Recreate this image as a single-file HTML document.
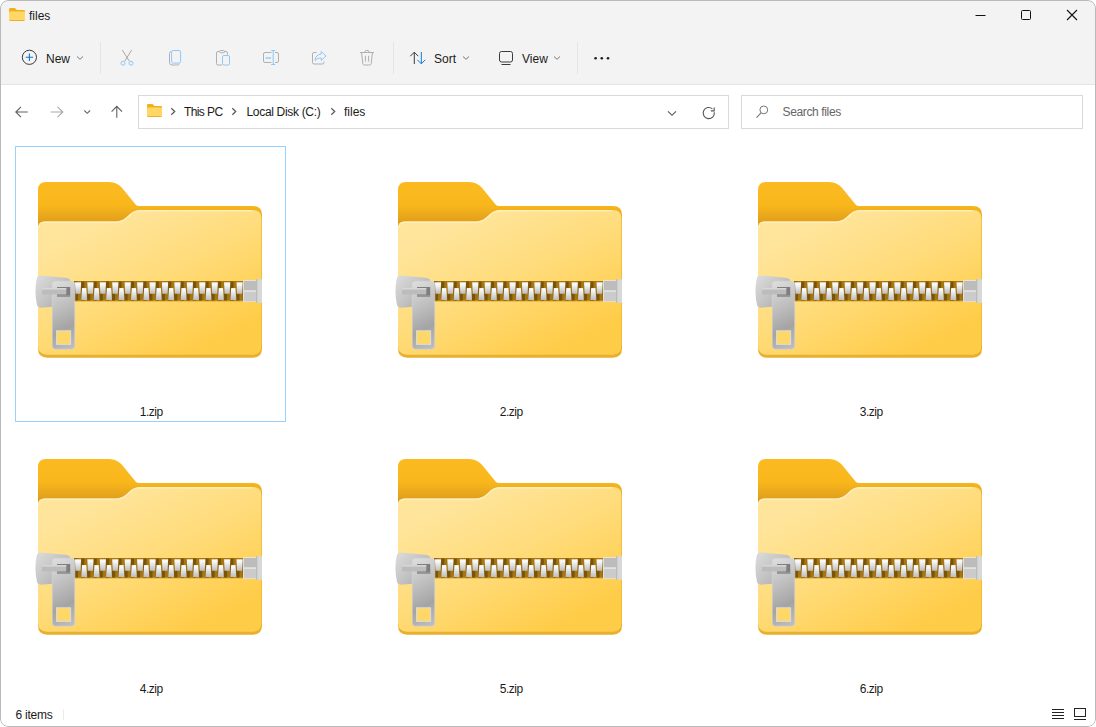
<!DOCTYPE html>
<html><head><meta charset="utf-8"><title>files</title>
<style>
*{box-sizing:border-box;margin:0;padding:0}
html,body{width:1096px;height:727px;background:#fff;overflow:hidden}
body{font-family:"Liberation Sans","Segoe UI",sans-serif;font-size:12px;color:#1b1b1b;position:relative}
#win{position:absolute;left:0;top:0;width:1096px;height:727px;border-radius:8px;overflow:hidden;background:#fff}
#win:after{content:"";position:absolute;left:0;top:0;width:1096px;height:727px;border:1px solid #bababa;border-radius:8px;pointer-events:none;box-sizing:border-box}
#top{position:absolute;left:0;top:0;width:100%;height:85px;background:#f3f3f3;border-bottom:1px solid #e5e5e5}
.abs{position:absolute}
.t{position:absolute;white-space:nowrap;line-height:16px}
.sep{position:absolute;top:42px;width:1px;height:32px;background:#e4e4e4}
.box{position:absolute;top:95px;height:34px;border:1px solid #d9d9d9;background:#fff}
.lbl{position:absolute;width:270px;margin-left:1px;text-align:center;font-size:12px;line-height:16px;color:#1b1b1b;letter-spacing:-0.5px;text-indent:0.5px}
svg{position:absolute;overflow:visible}
</style></head><body>
<div id="win">
<div id="top"></div>
<!-- title -->
<svg style="left:8px;top:7px" width="18" height="15" viewBox="0 0 17 15" preserveAspectRatio="none"><path d="M1 2.2Q1 1 2.2 1H6.5L8.5 3H15Q16 3 16 4V6H1Z" fill="#f3b01c"/><rect x="1" y="4.6" width="15" height="9.4" rx="1" fill="#ffd766"/><rect x="1.6" y="13" width="13.8" height="1" fill="#eeb02a"/></svg>
<div class="t" style="left:29px;top:8px;font-size:12px">files</div>
<svg style="left:975px;top:9px" width="12" height="12" viewBox="0 0 12 12"><path d="M0.5 6.5H10.5" stroke="#111" stroke-width="1"/></svg>
<svg style="left:1020px;top:9px" width="12" height="12" viewBox="0 0 12 12"><rect x="1.5" y="1.5" width="9" height="9" rx="1" fill="none" stroke="#111" stroke-width="1"/></svg>
<svg style="left:1066px;top:9px" width="12" height="12" viewBox="0 0 12 12"><path d="M1 1L11 11M11 1L1 11" stroke="#111" stroke-width="1.1"/></svg>

<!-- toolbar -->
<svg style="left:21px;top:49px" width="17" height="17" viewBox="0 0 17 17"><circle cx="8.4" cy="8.3" r="7.1" fill="none" stroke="#3a3a3a" stroke-width="1"/><path d="M8.4 4.6V12M4.7 8.3H12.1" stroke="#0a78d6" stroke-width="1.1"/></svg>
<div class="t" style="left:46px;top:51px;font-size:12px">New</div>
<svg style="left:76px;top:55px" width="8" height="6" viewBox="0 0 8 6"><path d="M1 1.5L4 4.3L7 1.5" fill="none" stroke="#777" stroke-width="1"/></svg>
<div class="sep" style="left:100px"></div>
<!-- cut -->
<svg style="left:119px;top:49px" width="16" height="17" viewBox="0 0 16 17"><path d="M3.3 1L10.3 12.2M12.7 1L5.7 12.2" stroke="#a9a9a9" stroke-width="1" fill="none"/><circle cx="4" cy="14.2" r="2" fill="none" stroke="#8cc8fb" stroke-width="1"/><circle cx="12" cy="14.2" r="2" fill="none" stroke="#8cc8fb" stroke-width="1"/></svg>
<!-- copy -->
<svg style="left:168px;top:49px" width="15" height="17" viewBox="0 0 15 17"><path d="M3 2.6Q1.5 2.8 1.5 4.5V13.5Q1.5 16 4 16H9.6Q11 16 11.2 14.8" fill="none" stroke="#b0b0b0" stroke-width="1"/><rect x="3.6" y="1.5" width="9" height="12.6" rx="1.6" fill="none" stroke="#8cc8fb" stroke-width="1"/></svg>
<!-- paste -->
<svg style="left:215px;top:49px" width="16" height="17" viewBox="0 0 16 17"><path d="M7 16H3Q1.5 16 1.5 14.5V4Q1.5 2.5 3 2.5H4.6M9.6 2.5H11Q12.5 2.5 12.5 4V5.6" fill="none" stroke="#b0b0b0" stroke-width="1"/><rect x="4.6" y="1.5" width="5" height="2.2" rx="1.1" fill="none" stroke="#b0b0b0" stroke-width="1"/><rect x="7.5" y="6.5" width="7" height="9.5" rx="1.4" fill="none" stroke="#8cc8fb" stroke-width="1"/></svg>
<!-- rename -->
<svg style="left:262px;top:49px" width="18" height="17" viewBox="0 0 18 17"><path d="M9.5 3.5H3Q1.5 3.5 1.5 5V12Q1.5 13.5 3 13.5H9.5M13 3.5H15Q16.5 3.5 16.5 5V12Q16.5 13.5 15 13.5H13" fill="none" stroke="#b0b0b0" stroke-width="1"/><path d="M11.2 1.5V15.5M9.2 1.5H13.2M9.2 15.5H13.2" stroke="#8cc8fb" stroke-width="1" fill="none"/><path d="M3.6 9H9" stroke="#8cc8fb" stroke-width="1.4"/></svg>
<!-- share -->
<svg style="left:311px;top:49px" width="17" height="17" viewBox="0 0 17 17"><path d="M5.5 3.5H3Q1.5 3.5 1.5 5V13.5Q1.5 15 3 15H11.5Q13 15 13 13.5V12.5" fill="none" stroke="#b0b0b0" stroke-width="1"/><path d="M10.2 2.5L15 7L10.2 11.5V9Q6 8.6 4 11.6Q4.6 5.6 10.2 5Z" fill="none" stroke="#8cc8fb" stroke-width="1" stroke-linejoin="round"/></svg>
<!-- delete -->
<svg style="left:359px;top:49px" width="16" height="17" viewBox="0 0 16 17"><path d="M1 3.5H15M5.8 3.3Q5.8 1.3 8 1.3Q10.2 1.3 10.2 3.3M2.6 3.8L3.8 14.6Q4 16 5.4 16H10.6Q12 16 12.2 14.6L13.4 3.8" fill="none" stroke="#b0b0b0" stroke-width="1"/><path d="M6.4 6.8V12.6M9.6 6.8V12.6" stroke="#b0b0b0" stroke-width="1"/></svg>
<div class="sep" style="left:393px"></div>
<!-- sort -->
<svg style="left:409px;top:50px" width="18" height="16" viewBox="0 0 18 16"><path d="M5.3 14V2.2M1.3 6.2L5.3 2.2L9.3 6.2" fill="none" stroke="#3a3a3a" stroke-width="1"/><path d="M12.3 2V13.8M8.3 9.8L12.3 13.8L16.3 9.8" fill="none" stroke="#0a78d6" stroke-width="1"/></svg>
<div class="t" style="left:434px;top:51px;font-size:12px">Sort</div>
<svg style="left:462px;top:55px" width="8" height="6" viewBox="0 0 8 6"><path d="M1 1.5L4 4.3L7 1.5" fill="none" stroke="#777" stroke-width="1"/></svg>
<!-- view -->
<svg style="left:498px;top:50px" width="16" height="16" viewBox="0 0 16 16"><rect x="1.5" y="1.5" width="13" height="10.5" rx="2" fill="none" stroke="#3a3a3a" stroke-width="1"/><path d="M3.5 14.5H12.5" stroke="#3a3a3a" stroke-width="1"/></svg>
<div class="t" style="left:522px;top:51px;font-size:12px">View</div>
<svg style="left:553px;top:55px" width="8" height="6" viewBox="0 0 8 6"><path d="M1 1.5L4 4.3L7 1.5" fill="none" stroke="#777" stroke-width="1"/></svg>
<div class="sep" style="left:577px"></div>
<svg style="left:593px;top:55px" width="18" height="6" viewBox="0 0 18 6"><circle cx="2.6" cy="3.2" r="1.3" fill="#1b1b1b"/><circle cx="8.8" cy="3.2" r="1.3" fill="#1b1b1b"/><circle cx="15" cy="3.2" r="1.3" fill="#1b1b1b"/></svg>
<!-- nav -->
<svg style="left:14px;top:105px" width="16" height="14" viewBox="0 0 16 14"><path d="M13.8 7H2M7 1.8L1.8 7L7 12.2" fill="none" stroke="#5f5f5f" stroke-width="1.1"/></svg>
<svg style="left:49px;top:105px" width="16" height="14" viewBox="0 0 16 14"><path d="M1.8 7H13.6M8.6 1.8L13.8 7L8.6 12.2" fill="none" stroke="#a8a8a8" stroke-width="1.1"/></svg>
<svg style="left:83px;top:108.500px" width="8" height="6" viewBox="0 0 8 6"><path d="M1.3 1.5L4.2 4.3L7.1 1.5" fill="none" stroke="#666" stroke-width="1.1"/></svg>
<svg style="left:110px;top:105px" width="14" height="14" viewBox="0 0 14 14"><path d="M6.8 12.8V1.6M1.6 6.6L6.8 1.4L12 6.6" fill="none" stroke="#5f5f5f" stroke-width="1.1"/></svg>
<div class="box" style="left:138px;width:591px"></div>
<svg style="left:146px;top:103px" width="17" height="15" viewBox="0 0 17 15"><path d="M1 2.2Q1 1 2.2 1H6.5L8.5 3H15Q16 3 16 4V6H1Z" fill="#f3b01c"/><rect x="1" y="4.6" width="15" height="9.4" rx="1" fill="#ffd766"/><rect x="1.6" y="13" width="13.8" height="1" fill="#eeb02a"/></svg>
<svg style="left:169.500px;top:107.400px" width="6" height="9" viewBox="0 0 6 9"><path d="M1.300 1.300L4.700 4.500L1.300 7.700" fill="none" stroke="#5a5a5a" stroke-width="1.250"/></svg>
<div class="t" style="left:184px;top:104px;letter-spacing:-0.6px">This PC</div>
<svg style="left:231.300px;top:107.400px" width="6" height="9" viewBox="0 0 6 9"><path d="M1.300 1.300L4.700 4.500L1.300 7.700" fill="none" stroke="#5a5a5a" stroke-width="1.250"/></svg>
<div class="t" style="left:246.500px;top:104px;letter-spacing:-0.32px">Local Disk (C:)</div>
<svg style="left:329.500px;top:107.400px" width="6" height="9" viewBox="0 0 6 9"><path d="M1.300 1.300L4.700 4.500L1.300 7.700" fill="none" stroke="#5a5a5a" stroke-width="1.250"/></svg>
<div class="t" style="left:344px;top:104px">files</div>
<svg style="left:667px;top:109.700px" width="10" height="7" viewBox="0 0 10 7"><path d="M1 1.3L5 5.3L9 1.3" fill="none" stroke="#555" stroke-width="1.1"/></svg>
<svg style="left:702px;top:106px" width="14" height="14" viewBox="0 0 14 14"><path d="M12.3 6.300A5.600 5.600 0 1 1 10.400 2.800" fill="none" stroke="#555" stroke-width="1.1"/><path d="M12.200 1.400V4.900H8.800" fill="none" stroke="#555" stroke-width="1.1"/></svg>
<div class="box" style="left:741px;width:342px"></div>
<svg style="left:755px;top:105px" width="14" height="14" viewBox="0 0 14 14"><circle cx="8.800" cy="4.900" r="3.900" fill="none" stroke="#777" stroke-width="1"/><path d="M6 7.800L1.500 12.600" stroke="#777" stroke-width="1.1"/></svg>
<div class="t" style="left:782.500px;top:104px;color:#666;letter-spacing:-0.36px">Search files</div>

<svg width="0" height="0" style="position:absolute"><defs>
<linearGradient id="gb" x1="0" y1="182" x2="0" y2="224" gradientUnits="userSpaceOnUse"><stop offset="0" stop-color="#fbbb20"/><stop offset=".55" stop-color="#f9b71c"/><stop offset="1" stop-color="#dd9c1c"/></linearGradient>
<linearGradient id="gf" x1="116" y1="212" x2="187" y2="356" gradientUnits="userSpaceOnUse"><stop offset="0" stop-color="#ffe59c"/><stop offset=".45" stop-color="#ffdc7c"/><stop offset="1" stop-color="#ffcc47"/></linearGradient>
<linearGradient id="gt" x1="0" y1="0" x2="0" y2="1"><stop offset="0" stop-color="#efefef"/><stop offset=".15" stop-color="#fbfbfb"/><stop offset=".55" stop-color="#dedede"/><stop offset="1" stop-color="#bcbcbc"/></linearGradient>
<linearGradient id="gs" x1="36" y1="276" x2="70" y2="308" gradientUnits="userSpaceOnUse"><stop offset="0" stop-color="#dcdcdc"/><stop offset=".5" stop-color="#c3c3c3"/><stop offset="1" stop-color="#a2a2a2"/></linearGradient>
<linearGradient id="gp" x1="48" y1="285" x2="80" y2="346" gradientUnits="userSpaceOnUse"><stop offset="0" stop-color="#dedede"/><stop offset=".38" stop-color="#bebebe"/><stop offset=".68" stop-color="#a4a4a4"/><stop offset="1" stop-color="#c0c0c0"/></linearGradient>
<linearGradient id="ge" x1="0" y1="280" x2="0" y2="302" gradientUnits="userSpaceOnUse"><stop offset="0" stop-color="#d9d9d9"/><stop offset=".45" stop-color="#b9b9b9"/><stop offset=".5" stop-color="#e4e4e4"/><stop offset="1" stop-color="#bdbdbd"/></linearGradient>
<symbol id="zip" viewBox="15 146 270 274">
<path d="M38 190Q38 182 46 182H108Q116.500 182 121.500 187.200L136 205Q136.800 206 139.500 206H253Q262 206 262 215V300H38Z" fill="url(#gb)"/>
<path d="M38 228Q38 221.500 44.500 221.500H115Q121.500 221.500 126 217.600L130.500 213.600Q134.500 210 140.500 210H253Q262 210 262 219V348.500Q262 357.700 252.800 357.700H47.200Q38 357.700 38 348.500Z" fill="#e8b02e"/>
<path d="M38 228Q38 221.500 44.500 221.500H115Q121.500 221.500 126 217.600L130.500 213.600Q134.500 210 140.500 210H253Q261.400 210 261.400 218.400V345.500Q261.400 354.700 252.800 354.700H47.200Q38 354.700 38 345.500Z" fill="url(#gf)"/>
<path d="M38.700 228Q38.700 222.200 44.500 222.200H115Q122 222.200 126.500 218.200L131 214.200Q134.800 210.700 140.500 210.700H252" fill="none" stroke="#fff1c4" stroke-width="1.400" opacity=".8"/>
<rect x="74" y="281" width="170" height="19.800" fill="#a67710"/>
<rect x="74" y="300.800" width="170" height="1.200" fill="#e2ad33" opacity=".6"/>
<path d="M75.60 281.5V300.5M82.70 281.5V300.5M95.13 281.5V300.5M107.56 281.5V300.5M119.99 281.5V300.5M132.42 281.5V300.5M144.85 281.5V300.5M157.28 281.5V300.5M169.71 281.5V300.5M182.14 281.5V300.5M194.57 281.5V300.5M207.00 281.5V300.5M219.43 281.5V300.5M231.86 281.5V300.5M244.29 281.5V300.5M76.30 293.5V300.5M88.73 293.5V300.5M101.16 293.5V300.5M113.59 293.5V300.5M126.02 293.5V300.5M138.45 293.5V300.5M150.88 293.5V300.5M163.31 293.5V300.5M175.74 293.5V300.5M188.17 293.5V300.5M200.60 293.5V300.5M213.03 293.5V300.5M225.46 293.5V300.5M237.89 293.5V300.5" stroke="#7a530a" stroke-width="3.200" fill="none"/>
<path d="M74.90 282.3H81.10L80.50 293.8H75.50ZM87.33 282.3H93.53L92.93 293.8H87.93ZM99.76 282.3H105.96L105.36 293.8H100.36ZM112.19 282.3H118.39L117.79 293.8H112.79ZM124.62 282.3H130.82L130.22 293.8H125.22ZM137.05 282.3H143.25L142.65 293.8H137.65ZM149.48 282.3H155.68L155.08 293.8H150.08ZM161.91 282.3H168.11L167.51 293.8H162.51ZM174.34 282.3H180.54L179.94 293.8H174.94ZM186.77 282.3H192.97L192.37 293.8H187.37ZM199.20 282.3H205.40L204.80 293.8H199.80ZM211.63 282.3H217.83L217.23 293.8H212.23ZM224.06 282.3H230.26L229.66 293.8H224.66ZM236.49 282.3H242.69L242.09 293.8H237.09Z" fill="url(#gt)"/>
<path d="M82.00 288H86.30L87.10 300H81.20ZM94.43 288H98.73L99.53 300H93.63ZM106.86 288H111.16L111.96 300H106.06ZM119.29 288H123.59L124.39 300H118.49ZM131.72 288H136.02L136.82 300H130.92ZM144.15 288H148.45L149.25 300H143.35ZM156.58 288H160.88L161.68 300H155.78ZM169.01 288H173.31L174.11 300H168.21ZM181.44 288H185.74L186.54 300H180.64ZM193.87 288H198.17L198.97 300H193.07ZM206.30 288H210.60L211.40 300H205.50ZM218.73 288H223.03L223.83 300H217.93ZM231.16 288H235.46L236.26 300H230.36Z" fill="url(#gt)"/>
<rect x="243" y="280.200" width="13.400" height="21.600" fill="#e6e6e6"/><rect x="243.800" y="281" width="12.400" height="9.300" fill="#bcbcbc"/><rect x="243.800" y="291.800" width="12.400" height="9.400" fill="#cbcbcb"/>
<rect x="256.200" y="279.200" width="5.800" height="23.600" fill="#d8d8d8"/>
<rect x="256.200" y="279.200" width="1" height="23.600" fill="#b3b3b3"/>
<path d="M36.800 278Q37.300 275.400 40 275.400L66 277.800Q70.500 278.500 70.500 282V303L66 305.800L40.500 307.700Q37.800 307.700 37 305Q34 291.500 36.800 278Z" fill="url(#gs)"/>
<path d="M52.200 284.500Q52.200 281.200 55.500 281.200H71.500Q74.800 281.200 74.800 284.500V346Q74.800 349.200 71.600 349.200H55.400Q52.200 349.200 52.200 346Z" fill="url(#gp)" stroke="#d4d4d4" stroke-width=".7"/>
<rect x="57" y="287" width="13.200" height="9.700" fill="#7e7e7e"/>
<rect x="57" y="295.200" width="13.200" height="1.500" fill="#9a9a9a"/>
<rect x="42" y="288" width="24.300" height="6.600" rx=".8" fill="#bcbcbc"/>
<rect x="42" y="288" width="24.300" height="1.600" fill="#d6d6d6"/>
<rect x="56.600" y="330.800" width="14" height="13.600" fill="#ffd766" stroke="#dcdcdc" stroke-width="1"/>
</symbol></defs></svg>
<div class="abs" style="left:15px;top:146px;width:271px;height:276px;border:1px solid #99d1ff"></div>
<svg style="left:15px;top:146px" width="270" height="274"><use href="#zip"/></svg>
<div class="lbl" style="left:15px;top:404px">1.zip</div>
<svg style="left:375px;top:146px" width="270" height="274"><use href="#zip"/></svg>
<div class="lbl" style="left:375px;top:404px">2.zip</div>
<svg style="left:735px;top:146px" width="270" height="274"><use href="#zip"/></svg>
<div class="lbl" style="left:735px;top:404px">3.zip</div>
<svg style="left:15px;top:423px" width="270" height="274"><use href="#zip"/></svg>
<div class="lbl" style="left:15px;top:681px">4.zip</div>
<svg style="left:375px;top:423px" width="270" height="274"><use href="#zip"/></svg>
<div class="lbl" style="left:375px;top:681px">5.zip</div>
<svg style="left:735px;top:423px" width="270" height="274"><use href="#zip"/></svg>
<div class="lbl" style="left:735px;top:681px">6.zip</div>
<!-- status -->
<div class="t" style="left:15.500px;top:707px;letter-spacing:-0.25px">6 items</div>
<div class="abs" style="left:63px;top:709px;width:1px;height:11px;background:#ececec"></div>
<svg style="left:1051px;top:707px" width="14" height="14" viewBox="0 0 14 14"><path d="M1 2.5H13M1 5.5H13M1 8.5H13M1 11.5H13" stroke="#222" stroke-width="1"/></svg>
<svg style="left:1073px;top:707px" width="14" height="14" viewBox="0 0 14 14"><rect x="1.5" y="1.5" width="11" height="8" fill="none" stroke="#222" stroke-width="1"/><path d="M1 12.5H13" stroke="#222" stroke-width="1"/></svg>
</div>
</body></html>
